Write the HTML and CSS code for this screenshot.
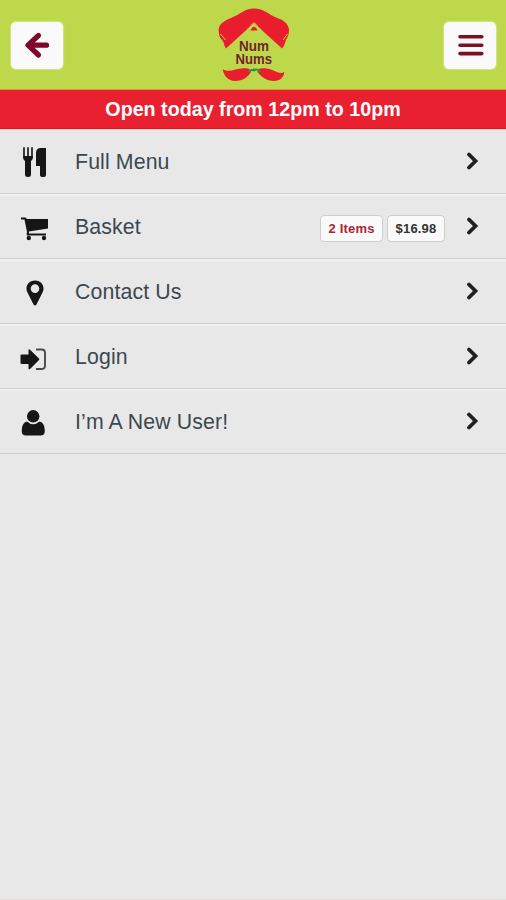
FILE: index.html
```html
<!DOCTYPE html>
<html lang="en">
<head>
<meta charset="utf-8">
<title>Num Nums</title>
<link rel="stylesheet" href="styles.css">
</head>
<body>
<header class="header">
  <button class="nav-button" aria-label="Back">
    <svg width="52" height="47" viewBox="0 0 52 47"><path class="back-arrow" d="M27.5 13.5 17 23.200 27.500 33M17.500 23.200H35.500"/></svg>
  </button>
  <svg class="logo" width="74" height="76" viewBox="0 0 74 76" role="img" aria-label="Num Nums">
    <path fill="#e91d2d" d="M9 42.500C7 40 7 36 5 34 2 31 1.500 27 1.700 23 2.500 17 9 14 16 11 24 8 27 2.500 37 2.500 47 2.500 51 8 58 11 66 14 71.500 17 72 24 72 29 70.500 31 69 34 67.500 38 67 41 65 42.500L37 17Z"/>
    <path class="logo-crease" d="M3.500 28 8.500 34M70.500 28 66 34M30 23.500C34 21 35 17 37 17 39 17 40 21 44 23.500"/>
    <path fill="#e91d2d" d="M33.500 24.500Q37 17 40.500 24.500Z"/>
    <text class="logo-text" x="22" y="44.5" textLength="30" lengthAdjust="spacingAndGlyphs">Num</text>
    <text class="logo-text" x="18.5" y="58" textLength="36.5" lengthAdjust="spacingAndGlyphs">Nums</text>
    <path fill="#e91d2d" d="M5.700 63.300C13 67 17 63 24 62.500 31 61.500 34 63 34 66 31 71 26 75 18 75 11 75 7 70 5.700 63.300ZM67.300 66C62 69 57 63.500 50 62.500 43 61.500 40 63 40.500 66 45 72 51 75 57 75 63 75 67 71 67.300 66Z"/>
    <path fill="none" stroke="#22994a" stroke-width="2" d="M32 66Q33 63 37 64.500Q41 62 43 66M36 65 37.500 62.500"/>
  </svg>
  <button class="nav-button" aria-label="Menu">
    <svg width="52" height="47" viewBox="0 0 52 47"><path class="menu-bars" d="M16 14.800H37.800M16 23.200H37.800M16 31.600H37.800"/></svg>
  </button>
</header>
<div class="banner">Open today from 12pm to 10pm</div>
<nav class="menu">
  <a class="row">
    <svg class="icon" viewBox="0 0 30 32"><path d="M4 1V10M8 1V10M12 1V10" stroke="#333" stroke-width="1.9" stroke-linecap="round"/><path d="M3 9H13Q13 13 11 14V27.500Q11 30 8 30 5 30 5 27.500V14Q3 13 3 9ZM21 1H26V28Q26 30 23 30 20 30 20 28V19H16V6Q16 1 21 1Z"/></svg>
    <span class="label">Full Menu</span>
    <svg class="chevron" viewBox="0 0 14 18"><path d="M3 2.500 9.500 9 3 15.500"/></svg>
  </a>
  <a class="row">
    <svg class="icon" viewBox="0 0 30 32"><path d="M1 4.500H5.500L7 6H28V15.500L9 18.500V20.500H26V22.500H7.500Q6 22.500 7 19L4.500 6.500H1Z"/><circle cx="8.800" cy="25" r="2.200"/><circle cx="24" cy="25" r="2.200"/></svg>
    <span class="label">Basket</span>
    <span class="badges"><span class="badge badge-items">2 Items</span><span class="badge badge-total">$16.98</span></span>
    <svg class="chevron" viewBox="0 0 14 18"><path d="M3 2.500 9.500 9 3 15.500"/></svg>
  </a>
  <a class="row">
    <svg class="icon" viewBox="0 0 30 32"><path fill-rule="evenodd" d="M15 2.500C9.500 2.500 6.500 6.500 6.500 10.500 6.500 12.500 7.200 14 8 15.500L13.500 26.500Q15 28.500 16.500 26.500L22 15.500C22.800 14 23.500 12.500 23.500 10.500 23.500 6.500 20.500 2.500 15 2.500ZM15 6.300A4.300 4.300 0 1 1 15 14.900 4.300 4.300 0 1 1 15 6.300Z"/></svg>
    <span class="label">Contact Us</span>
    <svg class="chevron" viewBox="0 0 14 18"><path d="M3 2.500 9.500 9 3 15.500"/></svg>
  </a>
  <a class="row">
    <svg class="icon" viewBox="0 0 30 32"><path d="M.500 12.500Q.500 11.500 1.500 11.500H8.500V7.500Q8.500 5.300 10.300 7L19 15.500Q19.800 16.300 19 17L10.300 25.700Q8.500 27 8.500 25V21H1.500Q.500 21 .500 20Z"/><path d="M16 6.500H21.500Q25 6.500 25 10V22.500Q25 26 21.500 26H16" fill="none" stroke="#4a4a4a" stroke-width="1.900"/></svg>
    <span class="label">Login</span>
    <svg class="chevron" viewBox="0 0 14 18"><path d="M3 2.500 9.500 9 3 15.500"/></svg>
  </a>
  <a class="row">
    <svg class="icon" viewBox="0 0 30 32"><ellipse cx="13.200" cy="9.300" rx="6.200" ry="6.200"/><path d="M7 14.500Q13.200 20 19.500 14.500 24.800 15.500 24.800 24 24.800 28.500 20.500 28.500H6Q1.700 28.500 1.700 24 1.700 15.500 7 14.500Z"/></svg>
    <span class="label">I’m A New User!</span>
    <svg class="chevron" viewBox="0 0 14 18"><path d="M3 2.500 9.500 9 3 15.500"/></svg>
  </a>
</nav>
</body>
</html>
```
FILE: styles.css
```css
* { box-sizing: border-box; }

body {
  margin: 0;
  min-height: 900px;
  background: #e8e8e8;
  border-bottom: 1px solid #dfe0d2;
  font-family: "Liberation Sans", Arial, sans-serif;
}

.header {
  display: flex;
  justify-content: space-between;
  align-items: flex-start;
  height: 90px;
  padding: 22px 10px 0 11px;
  background: #bdd94b;
  border-bottom: 1px solid #d39a3c;
}

.nav-button {
  width: 52px;
  height: 47px;
  padding: 0;
  border: 0;
  border-radius: 5px;
  background: #fafafa;
  box-shadow: 0 0 1px 1px #d2e489;
}

.nav-button svg { display: block; }

.back-arrow {
  fill: none;
  stroke: #80052b;
  stroke-width: 5.2;
  stroke-linecap: round;
  stroke-linejoin: round;
}

.menu-bars {
  fill: none;
  stroke: #7a1024;
  stroke-width: 3.6;
  stroke-linecap: round;
}

.logo { margin-top: -16px; }

.logo-crease {
  fill: none;
  stroke: #bdd94b;
  stroke-width: 1;
}

.logo-text {
  fill: #75222b;
  font-family: "Liberation Sans", Arial, sans-serif;
  font-size: 15px;
  font-weight: 700;
}

.banner {
  height: 39px;
  background: #e8202f;
  border-bottom: 1px solid #d8192a;
  color: #fff;
  font-size: 19.7px;
  font-weight: 700;
  line-height: 39px;
  text-align: center;
}

.row {
  display: flex;
  align-items: center;
  height: 64.85px;
  padding: 0 26px 0 20px;
  border-top: 2px solid #f0f0f0;
  border-bottom: 1px solid #d0d0d0;
}

.row:first-child {
  height: 65.4px;
  border-top: 1px solid #f8cfcf;
}

.icon {
  width: 30px;
  height: 32px;
  margin-top: 3px;
  fill: #161616;
}

.label {
  flex: 1;
  padding-left: 25px;
  color: #3b4850;
  font-size: 21.3px;
  letter-spacing: .12px;
  line-height: 28px;
}

.row:first-child .label { padding-top: 1px; }

.badges {
  display: flex;
  gap: 4px;
  margin: 2px 21px 0 0;
}

.badge {
  height: 27px;
  border: 1px solid #cdcdcd;
  border-radius: 4px;
  background: #fafafa;
  font-size: 13px;
  font-weight: 700;
  line-height: 25px;
  text-align: center;
}

.badge-items {
  width: 63px;
  color: #a82733;
  letter-spacing: .2px;
}

.badge-total {
  width: 58px;
  color: #333;
  letter-spacing: .2px;
}

.chevron {
  width: 14px;
  height: 18px;
  margin-top: -2px;
  fill: none;
  stroke: #202020;
  stroke-width: 3.8;
  stroke-linecap: round;
}
```
